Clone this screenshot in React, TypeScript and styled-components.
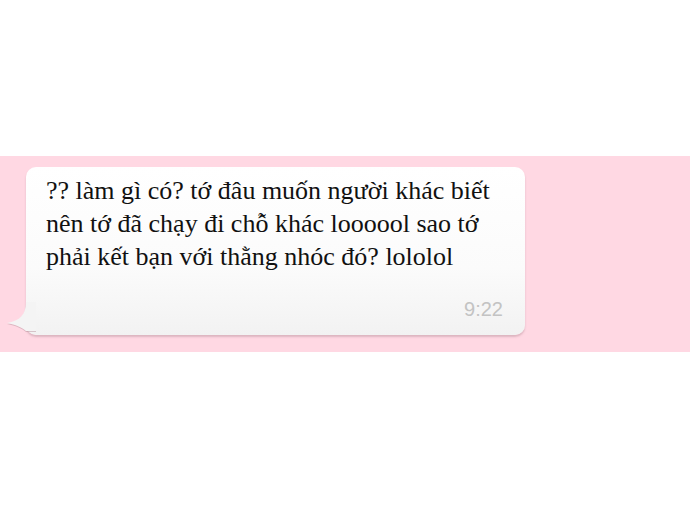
import React from "react";
import styled, { createGlobalStyle } from "styled-components";

const GlobalStyle = createGlobalStyle`
  html, body {
    margin: 0;
    padding: 0;
    background: #fff;
  }
`;

const Page = styled.div`
  width: 690px;
  height: 516px;
  padding-top: 156px;
  box-sizing: border-box;
`;

const Band = styled.div`
  height: 196px;
  background: #ffd8e3;
  padding: 11px 0 0 26px;
  box-sizing: border-box;
`;

const Bubble = styled.div`
  position: relative;
  width: 499px;
  height: 168px;
  box-sizing: border-box;
  padding: 7px 20px 0 20px;
  border-radius: 10px;
  background: linear-gradient(#ffffff 0%, #fbfbfb 60%, #f2f2f2 100%);
  box-shadow: 0 2px 2px rgba(180, 140, 150, 0.45);
`;

const Message = styled.p`
  margin: 0;
  font-family: "Liberation Serif", "Times New Roman", serif;
  font-size: 26px;
  line-height: 33px;
  color: #111;
  white-space: nowrap;
`;

const Time = styled.div`
  position: absolute;
  right: 22px;
  bottom: 14px;
  font-family: "Liberation Sans", Arial, sans-serif;
  font-size: 20px;
  color: #c3c3c3;
`;

const Tail = styled.svg`
  position: absolute;
  left: -20px;
  bottom: 3px;
  filter: drop-shadow(0 1.5px 0.5px rgba(180, 140, 150, 0.45));
`;

const App = () => (
  <Page>
    <GlobalStyle />
    <Band>
      <Bubble>
        <Tail width="30" height="30" viewBox="0 0 30 30">
          <path
            d="M20 0 C20 12 14 19 1 21 C10 23 15 25 20 29 L30 29 L30 0 Z"
            fill="#f4f4f4"
          />
        </Tail>
        <Message>
          ?? làm gì có? tớ đâu muốn người khác biết
          <br />
          nên tớ đã chạy đi chỗ khác loooool sao tớ
          <br />
          phải kết bạn với thằng nhóc đó? lololol
        </Message>
        <Time>9:22</Time>
      </Bubble>
    </Band>
  </Page>
);

export default App;
